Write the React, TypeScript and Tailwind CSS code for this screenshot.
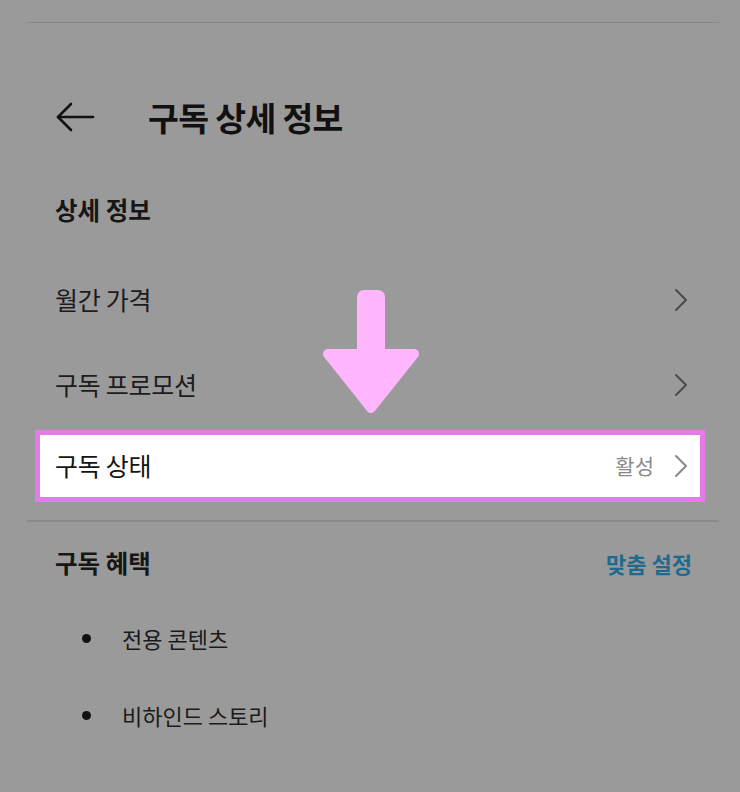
import React from "react";

const font = { fontFamily: '"Noto Sans CJK KR", "Noto Sans", sans-serif' };

const Chevron = ({ tone = "#4a4a4a" }: { tone?: string }) => (
  <svg width="18" height="26" viewBox="0 0 18 26" fill="none">
    <polyline points="4,3 14,13 4,23" stroke={tone} strokeWidth="2" strokeLinecap="round" strokeLinejoin="round" />
  </svg>
);

const Row = ({ label, h }: { label: string; h: string }) => (
  <div className={`flex items-center justify-between pl-[55px] pr-[50px] ${h}`}>
    <span className="text-[25px] text-[#1c1c1c] tracking-[-0.01em]">{label}</span>
    <Chevron />
  </div>
);

const PinkArrow = () => (
  <svg className="absolute left-[320px] top-[287px]" width="100" height="130" viewBox="0 0 100 130" fill="none">
    <rect x="37" y="3" width="28" height="74" rx="7" fill="#ffb6fd" />
    <polygon points="8,67 94,67 51,121" fill="#ffb6fd" stroke="#ffb6fd" strokeWidth="10" strokeLinejoin="round" />
  </svg>
);

export default function App() {
  return (
    <div className="relative w-[740px] h-[792px] bg-[#9a9a9a] overflow-hidden" style={font}>
      <div className="pt-[22px] ml-[27px] mr-[21px]">
        <div className="h-px bg-[#878787]" />
      </div>

      <div className="mt-[49px] h-[90px] flex items-center pl-[55px]">
        <svg width="40" height="32" viewBox="0 0 40 32" fill="none">
          <line x1="3" y1="16" x2="38" y2="16" stroke="#111" strokeWidth="2.6" strokeLinecap="round" />
          <polyline points="16,3 3,16 16,29" stroke="#111" strokeWidth="2.6" strokeLinecap="round" strokeLinejoin="round" />
        </svg>
        <h1 className="ml-[53px] text-[33.5px] font-bold text-[#111] tracking-[-0.02em]">구독 상세 정보</h1>
      </div>

      <div className="h-[96px] flex items-center pl-[55px]">
        <h2 className="text-[24.5px] font-bold text-[#161616]">상세 정보</h2>
      </div>

      <Row label="월간 가격" h="h-[84px]" />
      <Row label="구독 프로모션" h="h-[86px]" />

      <div className="mt-[2px] ml-[35px] w-[670px] h-[72px] border-[5px] border-[#e47ce8] bg-white flex items-center justify-between pl-[15px] pr-[10px]">
        <span className="text-[25px] text-[#141414] tracking-[-0.01em]">구독 상태</span>
        <div className="flex items-center gap-[18px]">
          <span className="text-[21px] text-[#8a8a8a]">활성</span>
          <Chevron tone="#8a8a8a" />
        </div>
      </div>

      <div className="mt-[18px] ml-[27px] mr-[21px] h-[2px] bg-[#8a8a8a]" />

      <div className="h-[82px] flex items-center justify-between pl-[55px] pr-[48px]">
        <h2 className="text-[24.5px] font-bold text-[#161616]">구독 혜택</h2>
        <span className="text-[22px] font-bold text-[#1f6a8e]">맞춤 설정</span>
      </div>

      <ul>
        <li className="h-[68px] flex items-center pl-[82px]">
          <span className="w-[9px] h-[9px] rounded-full bg-[#111]" />
          <span className="ml-[31px] text-[22px] text-[#1a1a1a]">전용 콘텐츠</span>
        </li>
        <li className="h-[86px] flex items-center pl-[82px]">
          <span className="w-[9px] h-[9px] rounded-full bg-[#111]" />
          <span className="ml-[31px] text-[22px] text-[#1a1a1a]">비하인드 스토리</span>
        </li>
      </ul>

      <PinkArrow />
    </div>
  );
}
